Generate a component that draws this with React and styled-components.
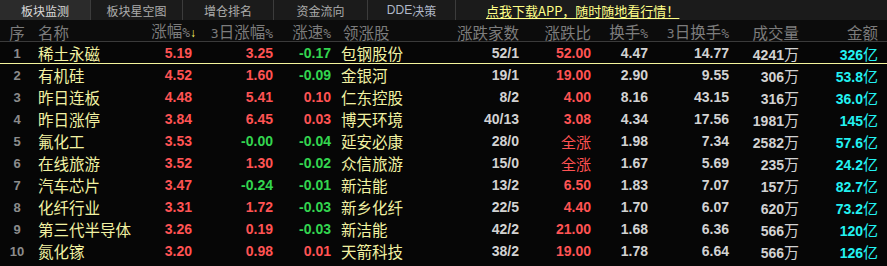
import React from "react";
import styled, { createGlobalStyle } from "styled-components";

const Global = createGlobalStyle`
  *, *::before, *::after { box-sizing: border-box; }
  html, body { margin: 0; padding: 0; background: #060606; }
  body { width: 887px; height: 266px; overflow: hidden; }
`;

const CJK = `"Noto Sans CJK SC", "Liberation Sans", sans-serif`;
const NUM = `"Liberation Sans", Arial, "Noto Sans CJK SC", sans-serif`;
const MONO = `"DejaVu Sans Mono", "Liberation Mono", monospace`;

const COLS = "38px 112px 42px 81px 58px 109px 79px 72px 57px 81px 70px 79px 9px";

const Page = styled.div`
  width: 887px;
  height: 266px;
  background: #060606;
  display: flex;
  flex-direction: column;
  overflow: hidden;
`;

const TabBar = styled.div`
  height: 20px;
  flex: none;
  background: #1b1b1b;
  display: flex;
  align-items: stretch;
`;

const Tab = styled.div`
  width: ${(p) => p.$w}px;
  background: ${(p) => (p.$active ? "#2b2b2b" : "#1b1b1b")};
  color: ${(p) => (p.$active ? "#dadada" : "#ababab")};
  border-right: 1px solid #3c3c3c;
  font-family: ${CJK};
  font-size: 12px;
  display: flex;
  align-items: center;
  justify-content: center;
`;

const DdeTab = styled(Tab)`
  color: #b0b8c8;
  font-family: ${NUM};
`;

const Promo = styled.a`
  margin-left: 30px;
  align-self: center;
  color: #ffff88;
  font-family: ${CJK};
  font-size: 13px;
  text-decoration: underline;
  text-underline-offset: 2px;
  cursor: pointer;
`;

const Grid = styled.div`
  display: grid;
  grid-template-columns: ${COLS};
  align-items: center;
  flex: none;
`;

const HeaderRow = styled(Grid)`
  height: 22px;
  background: #0c0c0c;
  border-bottom: 1px solid #3a3a3a;
  color: #7c7c7c;
  font-family: ${CJK};
  font-size: 15.5px;
`;

const Row = styled(Grid)`
  height: 22px;
  border-bottom: ${(p) => (p.$selected ? "1px solid #f4f49c" : "none")};
`;

const Cell = styled.div`
  text-align: ${(p) => p.$align || "right"};
  white-space: nowrap;
  padding-left: ${(p) => p.$pl || 0}px;
`;

const HCell = styled(Cell)`
  line-height: 21px;
`;

const Pct = styled.span`
  font-family: ${MONO};
  font-size: 13px;
`;

const Arrow = styled.span`
  color: #ffff66;
  font-size: 12px;
  font-family: ${NUM};
`;

const Idx = styled(Cell)`
  text-align: center;
  color: #8c8c8c;
  font-family: ${NUM};
  font-weight: bold;
  font-size: 13px;
  padding-right: 4px;
`;

const Name = styled(Cell)`
  text-align: left;
  color: #f2f2a2;
  font-family: ${CJK};
  font-size: 15.5px;
`;

const Num = styled(Cell)`
  color: ${(p) => p.$c};
  font-family: ${NUM};
  font-weight: bold;
  font-size: 14px;
`;

const Unit = styled.span`
  font-family: ${CJK};
  font-weight: normal;
  font-size: 15px;
`;

const AllUp = styled(Cell)`
  color: #ff5252;
  font-family: ${CJK};
  font-size: 15px;
`;

const RED = "#ff5353";
const GREEN = "#33d54f";
const GRAY = "#d2d2d2";
const CYAN = "#22f2f2";

const tone = (v) => (v.startsWith("-") ? GREEN : RED);

const rows = [
  ["1", "稀土永磁", "5.19", "3.25", "-0.17", "包钢股份", "52/1", "52.00", "4.47", "14.77", "4241", "326"],
  ["2", "有机硅", "4.52", "1.60", "-0.09", "金银河", "19/1", "19.00", "2.90", "9.55", "306", "53.8"],
  ["3", "昨日连板", "4.48", "5.41", "0.10", "仁东控股", "8/2", "4.00", "8.16", "43.15", "316", "36.0"],
  ["4", "昨日涨停", "3.84", "6.45", "0.03", "博天环境", "40/13", "3.08", "4.34", "17.56", "1981", "145"],
  ["5", "氟化工", "3.53", "-0.00", "-0.04", "延安必康", "28/0", "全涨", "1.98", "7.34", "2582", "57.6"],
  ["6", "在线旅游", "3.52", "1.30", "-0.02", "众信旅游", "15/0", "全涨", "1.67", "5.69", "235", "24.2"],
  ["7", "汽车芯片", "3.47", "-0.24", "-0.01", "新洁能", "13/2", "6.50", "1.83", "7.07", "157", "82.7"],
  ["8", "化纤行业", "3.31", "1.72", "-0.03", "新乡化纤", "22/5", "4.40", "1.70", "6.07", "620", "73.2"],
  ["9", "第三代半导体", "3.26", "0.19", "-0.03", "新洁能", "42/2", "21.00", "1.68", "6.36", "566", "120"],
  ["10", "氮化镓", "3.20", "0.98", "0.01", "天箭科技", "38/2", "19.00", "1.78", "6.64", "566", "126"],
];

const tabs = [
  { label: "板块监测", w: 91, active: true },
  { label: "板块星空图", w: 92 },
  { label: "增仓排名", w: 91 },
  { label: "资金流向", w: 94 },
];

export default function App() {
  return (
    <Page>
      <Global />
      <TabBar>
        {tabs.map((t) => (
          <Tab key={t.label} $w={t.w} $active={t.active}>
            {t.label}
          </Tab>
        ))}
        <DdeTab $w={88}>
          DDE<span style={{ fontFamily: CJK }}>决策</span>
        </DdeTab>
        <Promo>点我下载APP，随时随地看行情！</Promo>
      </TabBar>
      <HeaderRow>
        <HCell $align="center" style={{ paddingRight: 4 }}>序</HCell>
        <HCell $align="left">名称</HCell>
        <HCell style={{ marginRight: -4 }}>
          涨幅<Pct>%</Pct>
          <Arrow>↓</Arrow>
        </HCell>
        <HCell>
          <Pct>3</Pct>日涨幅<Pct>%</Pct>
        </HCell>
        <HCell>
          涨速<Pct>%</Pct>
        </HCell>
        <HCell $align="left" $pl={12}>领涨股</HCell>
        <HCell>涨跌家数</HCell>
        <HCell>涨跌比</HCell>
        <HCell>
          换手<Pct>%</Pct>
        </HCell>
        <HCell>
          <Pct>3</Pct>日换手<Pct>%</Pct>
        </HCell>
        <HCell>成交量</HCell>
        <HCell>金额</HCell>
        <div />
      </HeaderRow>
      {rows.map((r, i) => (
        <Row key={r[0]} $selected={i === 0}>
          <Idx>{r[0]}</Idx>
          <Name>{r[1]}</Name>
          <Num $c={RED}>{r[2]}</Num>
          <Num $c={tone(r[3])}>{r[3]}</Num>
          <Num $c={tone(r[4])}>{r[4]}</Num>
          <Name $pl={10}>{r[5]}</Name>
          <Num $c={GRAY}>{r[6]}</Num>
          {r[7] === "全涨" ? <AllUp>全涨</AllUp> : <Num $c={RED}>{r[7]}</Num>}
          <Num $c={GRAY}>{r[8]}</Num>
          <Num $c={GRAY}>{r[9]}</Num>
          <Num $c={GRAY}>
            {r[10]}
            <Unit>万</Unit>
          </Num>
          <Num $c={CYAN}>
            {r[11]}
            <Unit>亿</Unit>
          </Num>
          <div />
        </Row>
      ))}
    </Page>
  );
}
